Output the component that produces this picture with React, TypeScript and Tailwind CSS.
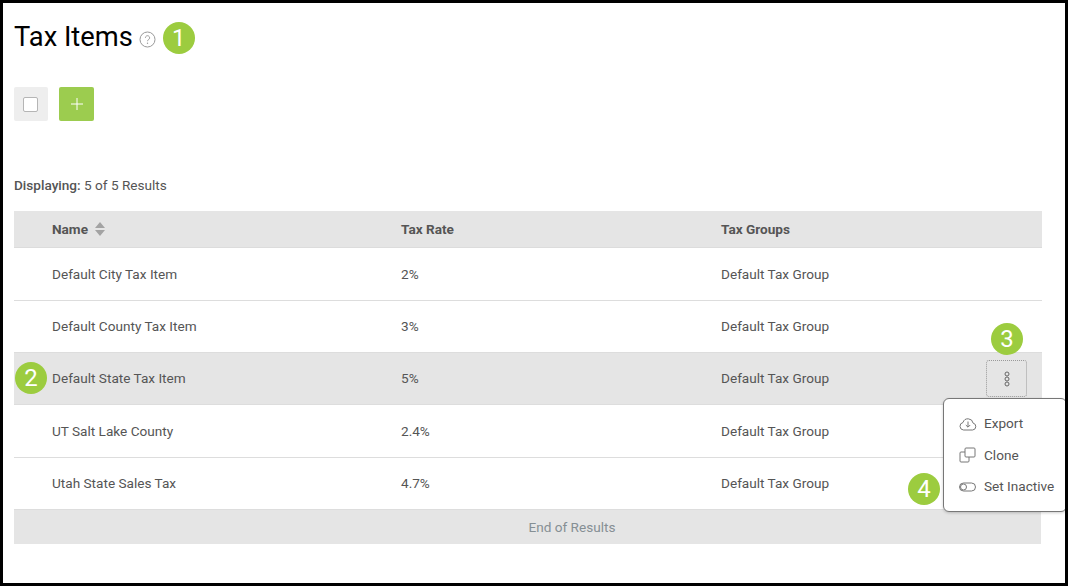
import React from "react";

const Badge = ({ n, className = "" }: { n: number; className?: string }) => (
  <div className={"flex h-8 w-8 items-center justify-center rounded-full bg-[#9ccc3f] text-[24px] leading-none text-white " + className}>{n}</div>
);

const rows = [
  ["Default City Tax Item", "2%", "h-[53px]"],
  ["Default County Tax Item", "3%", "h-[52px]"],
  ["Default State Tax Item", "5%", "h-[52px]"],
  ["UT Salt Lake County", "2.4%", "h-[53px]"],
  ["Utah State Sales Tax", "4.7%", "h-[52px]"],
];

export default function App() {
  return (
    <div className="relative h-[586px] w-[1068px] overflow-hidden border-[3px] border-black bg-white pl-[11px] pr-[23px] font-['Roboto',sans-serif] text-[13.6px] text-[#555]">
      <div className="flex h-[84px] items-start pt-[16px]">
        <h1 className="text-[27.3px] leading-[36px] text-black">Tax Items</h1>
        <svg className="ml-[6px] mt-[12px]" width="17" height="17" viewBox="0 0 17 17" fill="none">
          <circle cx="8.5" cy="8.5" r="7.5" stroke="#999" strokeWidth="1" />
          <path d="M6.4 6.8a2.1 2.1 0 1 1 3.2 1.8c-.7.4-1.1.8-1.1 1.6" stroke="#999" strokeWidth="1" />
          <circle cx="8.5" cy="12.2" r=".7" fill="#999" />
        </svg>
        <Badge n={1} className="ml-[7px] mt-[3px]" />
      </div>
      <div className="flex gap-[11px]">
        <div className="flex h-[34px] w-[34px] items-center justify-center rounded-[2px] bg-[#eeeeee]">
          <div className="mr-[1px] h-[15px] w-[15px] rounded-[2px] border border-[#b5b5b5] bg-white" />
        </div>
        <div className="flex h-[34px] w-[35px] items-center justify-center rounded-[2px] bg-[#9ccc4f]">
          <svg width="12" height="12" viewBox="0 0 12 12"><path d="M6 0v12M0 6h12" stroke="#fff" strokeWidth="1" /></svg>
        </div>
      </div>
      <div className="mt-[54px] h-[20px] leading-[20px]"><span className="font-medium">Displaying:</span> 5 of 5 Results</div>
      <div className="mt-[16px]">
        <div className="flex h-[37px] items-center border-b border-[#dcdcdc] bg-[#e5e5e5] pl-[38px] font-bold">
          <div className="flex w-[349px] items-center gap-[7px]">
            Name
            <svg width="10" height="14" viewBox="0 0 10 14"><path d="M5 0l5 6H0zM5 14l5-6H0z" fill="#a3a3a3" /></svg>
          </div>
          <div className="w-[320px]">Tax Rate</div>
          <div>Tax Groups</div>
        </div>
        {rows.map(([name, rate, h], i) => (
          <div key={name} className={"relative flex items-center border-b border-[#dddddd] pl-[38px] " + h + (i === 2 ? " bg-[#e5e5e5]" : "")}>
            <div className="w-[349px]">{name}</div>
            <div className="w-[320px]">{rate}</div>
            <div>Default Tax Group</div>
            {i === 2 && (
              <>
                <Badge n={2} className="absolute left-[1px] top-[9px]" />
                <div className="absolute left-[972px] top-[7px] flex h-[37px] w-[41px] items-center justify-center rounded-[3px] border border-dotted border-[#999]">
                  <svg width="6" height="16" viewBox="0 0 6 16" fill="none" stroke="#666" strokeWidth="1">
                    <circle cx="3" cy="3" r="2" /><circle cx="3" cy="8" r="2" /><circle cx="3" cy="13" r="2" />
                  </svg>
                </div>
              </>
            )}
          </div>
        ))}
        <div className="mr-[1px] flex h-[34px] items-center justify-center bg-[#e5e5e5] pl-[89px] text-[#858f94]">End of Results</div>
      </div>

      <Badge n={3} className="absolute left-[988px] top-[320px]" />
      <Badge n={4} className="absolute left-[905px] top-[470px]" />

      <div className="absolute left-[940px] top-[395px] flex h-[114px] w-[124px] flex-col gap-[10.5px] rounded-[6px] border border-[#777] bg-white pl-[15px] pt-[14px] shadow-[0_1px_3px_rgba(0,0,0,0.2)]">
        <div className="flex h-[21px] items-center gap-[7px]">
          <svg width="18" height="14" viewBox="0 0 18 14" fill="none" stroke="#777" strokeWidth="1">
            <path d="M4.5 13h9a3.5 3.5 0 0 0 .6-6.9A5.2 5.2 0 0 0 4 5.5 3.8 3.8 0 0 0 4.5 13z" />
            <path d="M9 4.5v5.5M6.8 8L9 10.2 11.2 8" />
          </svg>
          Export
        </div>
        <div className="flex h-[21px] items-center gap-[8px]">
          <svg width="17" height="16" viewBox="0 0 17 16" fill="none" stroke="#777" strokeWidth="1">
            <rect x="6" y="1" width="10" height="9" rx="1" />
            <path d="M6 5H2a1 1 0 0 0-1 1v8a1 1 0 0 0 1 1h7a1 1 0 0 0 1-1v-4" />
          </svg>
          Clone
        </div>
        <div className="flex h-[21px] items-center gap-[7px]">
          <svg width="18" height="12" viewBox="0 0 18 12" fill="none" stroke="#777" strokeWidth="1">
            <rect x=".5" y="2" width="16" height="8" rx="4" />
            <circle cx="4.5" cy="6" r="3" />
          </svg>
          Set Inactive
        </div>
      </div>
    </div>
  );
}
